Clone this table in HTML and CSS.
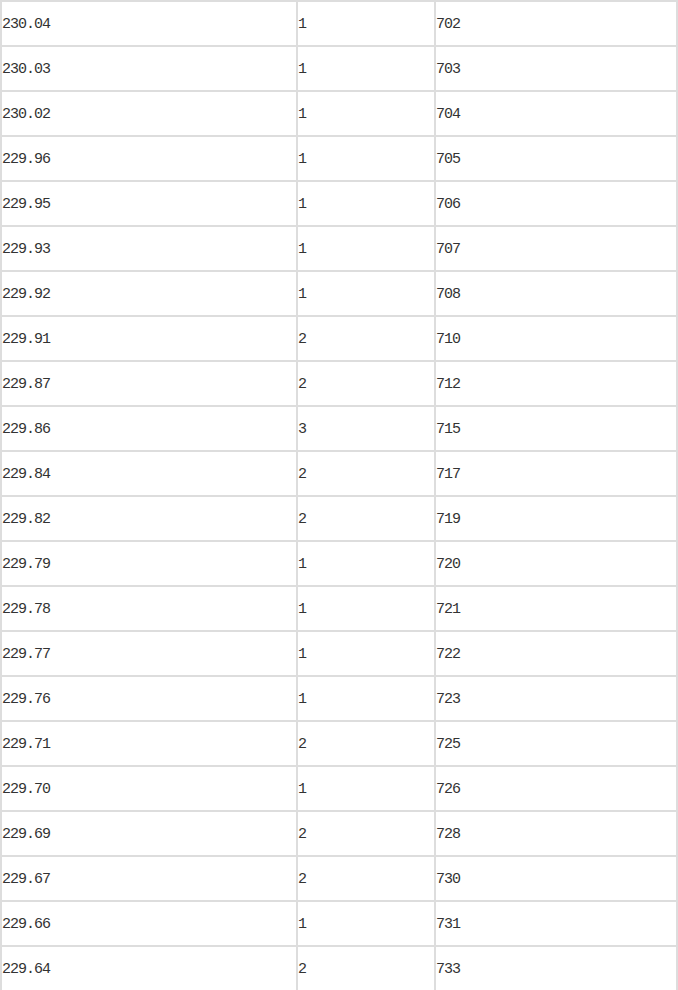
FILE: index.html
```html
<!DOCTYPE html>
<html>
<head>
<meta charset="utf-8">
<link rel="stylesheet" href="styles.css">
</head>
<body>
<table class="grid">
<tbody>
<tr><td class="c1">230.04</td><td class="c2">1</td><td class="c3">702</td></tr>
<tr><td class="c1">230.03</td><td class="c2">1</td><td class="c3">703</td></tr>
<tr><td class="c1">230.02</td><td class="c2">1</td><td class="c3">704</td></tr>
<tr><td class="c1">229.96</td><td class="c2">1</td><td class="c3">705</td></tr>
<tr><td class="c1">229.95</td><td class="c2">1</td><td class="c3">706</td></tr>
<tr><td class="c1">229.93</td><td class="c2">1</td><td class="c3">707</td></tr>
<tr><td class="c1">229.92</td><td class="c2">1</td><td class="c3">708</td></tr>
<tr><td class="c1">229.91</td><td class="c2">2</td><td class="c3">710</td></tr>
<tr><td class="c1">229.87</td><td class="c2">2</td><td class="c3">712</td></tr>
<tr><td class="c1">229.86</td><td class="c2">3</td><td class="c3">715</td></tr>
<tr><td class="c1">229.84</td><td class="c2">2</td><td class="c3">717</td></tr>
<tr><td class="c1">229.82</td><td class="c2">2</td><td class="c3">719</td></tr>
<tr><td class="c1">229.79</td><td class="c2">1</td><td class="c3">720</td></tr>
<tr><td class="c1">229.78</td><td class="c2">1</td><td class="c3">721</td></tr>
<tr><td class="c1">229.77</td><td class="c2">1</td><td class="c3">722</td></tr>
<tr><td class="c1">229.76</td><td class="c2">1</td><td class="c3">723</td></tr>
<tr><td class="c1">229.71</td><td class="c2">2</td><td class="c3">725</td></tr>
<tr><td class="c1">229.70</td><td class="c2">1</td><td class="c3">726</td></tr>
<tr><td class="c1">229.69</td><td class="c2">2</td><td class="c3">728</td></tr>
<tr><td class="c1">229.67</td><td class="c2">2</td><td class="c3">730</td></tr>
<tr><td class="c1">229.66</td><td class="c2">1</td><td class="c3">731</td></tr>
<tr><td class="c1">229.64</td><td class="c2">2</td><td class="c3">733</td></tr>
</tbody>
</table>
</body>
</html>
```
FILE: styles.css
```css
html, body {
  margin: 0;
  padding: 0;
  background: #fff;
  overflow: hidden;
}
.grid {
  border-collapse: separate;
  border-spacing: 0;
  border-left: 2px solid #dddddd;
  border-top: 2px solid #dddddd;
  table-layout: fixed;
  width: 678px;
  font-family: "Liberation Mono", "DejaVu Sans Mono", monospace;
  font-size: 15px;
  letter-spacing: -1px;
  color: #333;
}
.grid td {
  border-right: 2px solid #dddddd;
  border-bottom: 2px solid #dddddd;
  height: 41px;
  padding: 2px 0 0 0;
  box-sizing: content-box;
  vertical-align: middle;
  line-height: 16px;
}
.grid .c1 { width: 294px; }
.grid .c2 { width: 136px; }
.grid .c3 { width: 240px; }
```
